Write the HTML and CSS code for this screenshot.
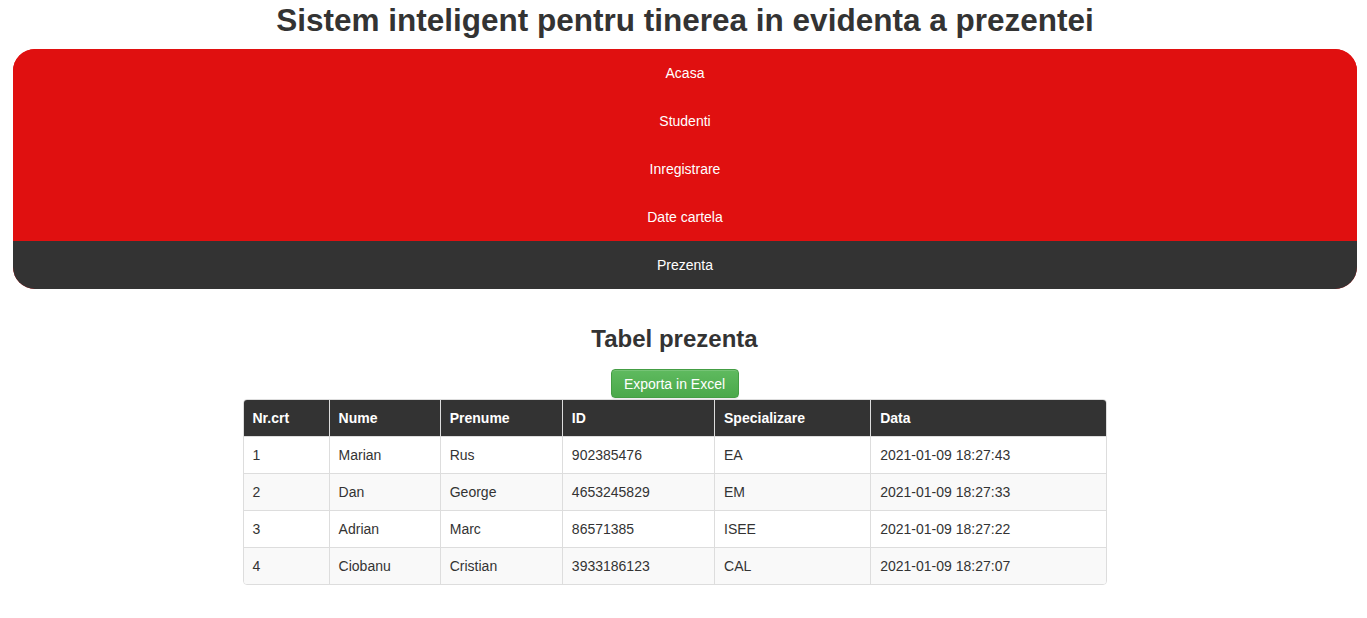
FILE: index.html
```html
<!DOCTYPE html>
<html>
<head>
<meta charset="utf-8">
<link rel="stylesheet" href="styles.css">
</head>
<body>
<h1 class="title">Sistem inteligent pentru tinerea in evidenta a prezentei</h1>
<nav class="nav">
  <a class="nav-item">Acasa</a>
  <a class="nav-item">Studenti</a>
  <a class="nav-item">Inregistrare</a>
  <a class="nav-item">Date cartela</a>
  <a class="nav-item active">Prezenta</a>
</nav>
<main class="content">
  <h2 class="subtitle">Tabel prezenta</h2>
  <button class="btn">Exporta in Excel</button>
  <table class="grid">
    <colgroup>
      <col class="c1"><col class="c2"><col class="c3"><col class="c4"><col class="c5"><col class="c6">
    </colgroup>
    <thead>
      <tr><th>Nr.crt</th><th>Nume</th><th>Prenume</th><th>ID</th><th>Specializare</th><th>Data</th></tr>
    </thead>
    <tbody>
      <tr><td>1</td><td>Marian</td><td>Rus</td><td>902385476</td><td>EA</td><td>2021-01-09 18:27:43</td></tr>
      <tr><td>2</td><td>Dan</td><td>George</td><td>4653245829</td><td>EM</td><td>2021-01-09 18:27:33</td></tr>
      <tr><td>3</td><td>Adrian</td><td>Marc</td><td>86571385</td><td>ISEE</td><td>2021-01-09 18:27:22</td></tr>
      <tr><td>4</td><td>Ciobanu</td><td>Cristian</td><td>3933186123</td><td>CAL</td><td>2021-01-09 18:27:07</td></tr>
    </tbody>
  </table>
</main>
</body>
</html>
```
FILE: styles.css
```css
html, body {
  margin: 0;
  padding: 0;
  background: #fff;
}
body {
  font-family: "Liberation Sans", Arial, sans-serif;
  font-size: 14px;
  color: #333;
}
.title {
  margin: 0;
  padding-top: 1px;
  height: 48px;
  line-height: 38px;
  font-size: 31.5px;
  font-weight: bold;
  text-align: center;
  padding-left: 3px;
  color: #333;
  box-sizing: border-box;
}
.nav {
  display: flex;
  flex-direction: column;
  margin: 0 10px 0 13px;
  margin-top: 1px;
  border-radius: 22px;
  overflow: hidden;
  background: #e01010;
}
.nav-item {
  display: block;
  height: 48px;
  line-height: 48px;
  text-align: center;
  color: #fff;
  font-size: 14px;
  background: #e01010;
}
.nav-item.active {
  background: #333;
}
.content {
  display: flex;
  flex-direction: column;
  align-items: center;
  padding: 0 21px 0 3px;
}
.subtitle {
  margin: 35px 0 0;
  font-size: 24px;
  font-weight: bold;
  line-height: 30px;
  height: 30px;
}
.btn {
  margin-top: 15px;
  width: 128px;
  height: 29px;
  border: 1px solid #449d44;
  border-radius: 4px;
  background: linear-gradient(#5fba5f, #4aa94a);
  color: #fff;
  font-family: "Liberation Sans", Arial, sans-serif;
  font-size: 14px;
  padding: 0;
  box-shadow: inset 0 1px 0 rgba(255,255,255,.15), 0 1px 1px rgba(0,0,0,.075);
}
.grid {
  margin-top: 1px;
  width: 864px;
  border-collapse: separate;
  border-spacing: 0;
  border: 1px solid #ddd;
  border-radius: 4px;
  overflow: hidden;
  table-layout: fixed;
}
.c1 { width: 85px; }
.c2 { width: 111px; }
.c3 { width: 122px; }
.c4 { width: 152px; }
.c5 { width: 156px; }
.c6 { width: 235px; }
.grid th, .grid td {
  text-align: left;
  padding: 0 9px;
  height: 37px;
  box-sizing: border-box;
  border-left: 1px solid #ddd;
  border-top: 1px solid #ddd;
  line-height: 20px;
}
.grid th:first-child, .grid td:first-child {
  border-left: none;
}
.grid th {
  background: #333;
  color: #fff;
  font-weight: bold;
  border-top: none;
  height: 36px;
}
.grid tbody tr:nth-child(even) td {
  background: #f9f9f9;
}
```
